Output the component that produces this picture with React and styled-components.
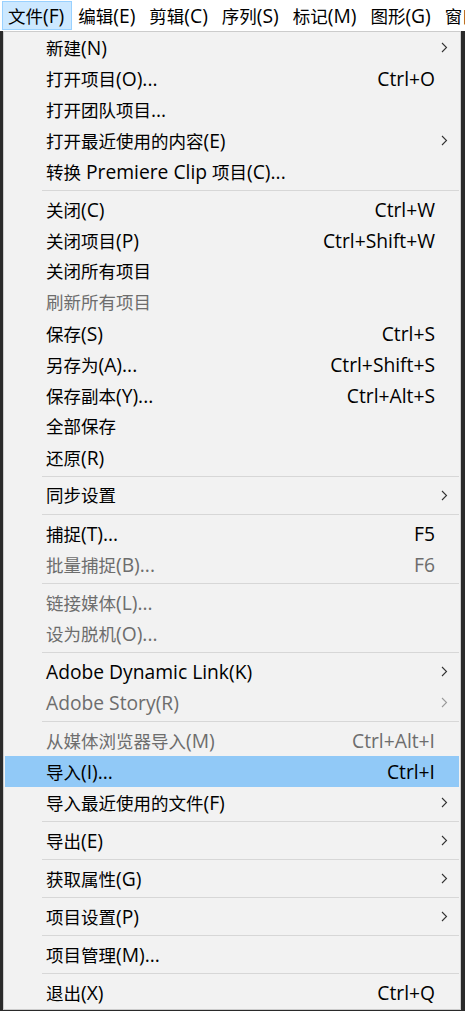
import styled, { createGlobalStyle } from 'styled-components';

const GlobalStyle = createGlobalStyle`
  html, body {
    margin: 0;
    padding: 0;
    background: #2a2a2a;
  }
  body {
    font-family: "Open Sans", "Noto Sans CJK SC", sans-serif;
  }
`;

const Page = styled.div`
  width: 465px;
  height: 1011px;
  background: #2a2a2a;
  overflow: hidden;
`;

const MenuBar = styled.div`
  display: flex;
  align-items: stretch;
  height: 31px;
  padding: 1px 0 1px 2px;
  box-sizing: border-box;
  background: #ffffff;
  white-space: nowrap;
  overflow: hidden;
`;

const BarItem = styled.div`
  display: flex;
  align-items: center;
  padding: 0 7px 0 5px;
  font-size: 17.5px;
  line-height: 1;
  color: #000;
  border: 1px solid ${(p) => (p.$active ? '#99d1ff' : 'transparent')};
  background: ${(p) => (p.$active ? '#cce8ff' : 'transparent')};
`;

const Panel = styled.div`
  margin-left: 3px;
  width: 458px;
  box-sizing: border-box;
  border: 1px solid #cccccc;
  padding: 0 1px 1px;
  background: #f2f2f2;
`;

const Row = styled.div`
  display: grid;
  grid-template-columns: 1fr auto 24px;
  align-items: center;
  height: 31px;
  padding-left: 41px;
  font-size: 17.5px;
  color: ${(p) => (p.$disabled ? '#6d6d6d' : '#000')};
  background: ${(p) => (p.$hover ? '#91c9f7' : 'transparent')};
  white-space: nowrap;
`;

const Label = styled.span`
  line-height: 1;
`;

const Shortcut = styled.span`
  line-height: 1;
  text-align: right;
`;

// YaHei draws its Latin glyphs larger than the CJK ones
const Latin = styled.span`
  font-size: 1.1em;
`;

const ArrowCell = styled.span`
  display: flex;
  align-items: center;
  padding-left: 6px;
`;

const Separator = styled.div`
  height: 1px;
  margin: 3px 0 3px 37px;
  background: #d7d7d7;
`;

function Mixed({ text }) {
  return text
    .split(/([\u0000-\u2e7f]+)/)
    .filter(Boolean)
    .map((part, i) => (/^[\u0000-\u2e7f]+$/.test(part) ? <Latin key={i}>{part}</Latin> : part));
}

function Chevron({ disabled }) {
  return (
    <svg width="7" height="11" viewBox="0 0 7 11">
      <path
        d="M1 1 L5.5 5.5 L1 10"
        fill="none"
        stroke={disabled ? '#9a9a9a' : '#333'}
        strokeWidth="1.1"
      />
    </svg>
  );
}

const menuBar = ['文件(F)', '编辑(E)', '剪辑(C)', '序列(S)', '标记(M)', '图形(G)', '窗口(W)'];

const items = [
  { label: '新建(N)', sub: true },
  { label: '打开项目(O)...', key: 'Ctrl+O' },
  { label: '打开团队项目...' },
  { label: '打开最近使用的内容(E)', sub: true },
  { label: '转换 Premiere Clip 项目(C)...' },
  'sep',
  { label: '关闭(C)', key: 'Ctrl+W' },
  { label: '关闭项目(P)', key: 'Ctrl+Shift+W' },
  { label: '关闭所有项目' },
  { label: '刷新所有项目', off: true },
  { label: '保存(S)', key: 'Ctrl+S' },
  { label: '另存为(A)...', key: 'Ctrl+Shift+S' },
  { label: '保存副本(Y)...', key: 'Ctrl+Alt+S' },
  { label: '全部保存' },
  { label: '还原(R)' },
  'sep',
  { label: '同步设置', sub: true },
  'sep',
  { label: '捕捉(T)...', key: 'F5' },
  { label: '批量捕捉(B)...', key: 'F6', off: true },
  'sep',
  { label: '链接媒体(L)...', off: true },
  { label: '设为脱机(O)...', off: true },
  'sep',
  { label: 'Adobe Dynamic Link(K)', sub: true },
  { label: 'Adobe Story(R)', sub: true, off: true },
  'sep',
  { label: '从媒体浏览器导入(M)', key: 'Ctrl+Alt+I', off: true },
  { label: '导入(I)...', key: 'Ctrl+I', hover: true },
  { label: '导入最近使用的文件(F)', sub: true },
  'sep',
  { label: '导出(E)', sub: true },
  'sep',
  { label: '获取属性(G)', sub: true },
  'sep',
  { label: '项目设置(P)', sub: true },
  'sep',
  { label: '项目管理(M)...' },
  'sep',
  { label: '退出(X)', key: 'Ctrl+Q' },
];

export default function App() {
  return (
    <Page>
      <GlobalStyle />
      <MenuBar>
        {menuBar.map((m, i) => (
          <BarItem key={m} $active={i === 0}>
            <span>
              <Mixed text={m} />
            </span>
          </BarItem>
        ))}
      </MenuBar>
      <Panel>
        {items.map((it, i) =>
          it === 'sep' ? (
            <Separator key={i} />
          ) : (
            <Row key={i} $disabled={it.off} $hover={it.hover}>
              <Label>
                <Mixed text={it.label} />
              </Label>
              <Shortcut>{it.key ? <Latin>{it.key}</Latin> : ''}</Shortcut>
              <ArrowCell>{it.sub && <Chevron disabled={it.off} />}</ArrowCell>
            </Row>
          )
        )}
      </Panel>
    </Page>
  );
}
